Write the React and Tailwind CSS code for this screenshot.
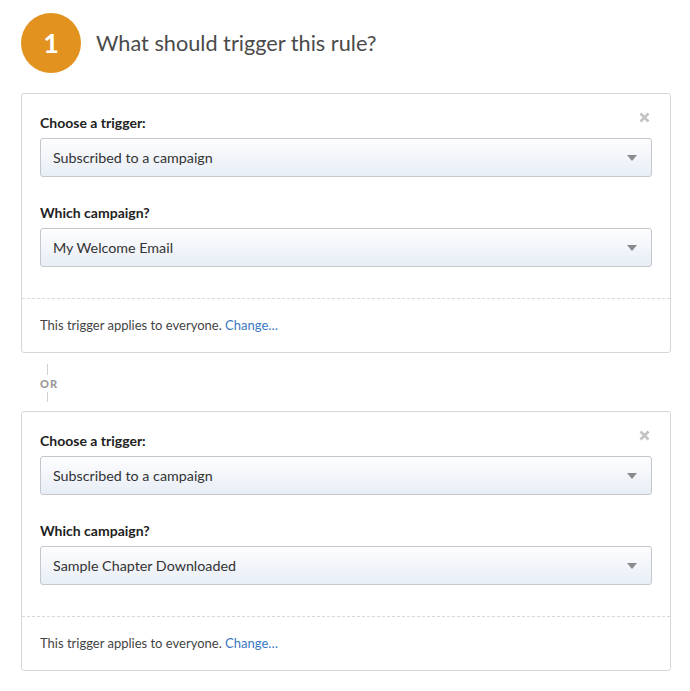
import React from "react";

const Select = ({value}) => (
  <div className="relative flex h-[39px] items-center rounded-[3px] border border-[#c4c7cc] bg-gradient-to-b from-[#fdfdfe] to-[#e8eef6] pl-[12px] text-[14.3px] text-[#333]">
    {value}
    <span className="absolute right-[14px] top-[16px] h-0 w-0 border-x-[5px] border-t-[6px] border-x-transparent border-t-[#8a8a8a]" />
  </div>
);

const TriggerCard = ({campaign}) => (
  <div className="relative rounded-[3px] border border-[#d6d6d6] bg-white">
    <svg
      className="absolute right-[20px] top-[18px]"
      width="11"
      height="11"
      viewBox="0 0 11 11"
    >
      <path d="M1.5 1.5 L9.5 9.5 M9.5 1.5 L1.5 9.5" stroke="#c3c3c3" strokeWidth="2.6" />
    </svg>
    <div className="px-[18px] pb-[31px] pt-[20px]">
      <div className="mb-[6px] h-[18px] text-[14px] font-bold leading-[18px] text-[#222]">
        Choose a trigger:
      </div>
      <Select value="Subscribed to a campaign" />
      <div className="mb-[6px] mt-[27px] h-[18px] text-[14px] font-bold leading-[18px] text-[#222]">
        Which campaign?
      </div>
      <Select value={campaign} />
    </div>
    <div className="flex h-[54px] items-center border-t border-dashed border-[#d9d9d9] px-[18px] text-[13px] text-[#444]">
      This trigger applies to everyone.&nbsp;
      <span className="text-[#3b78c3]">Change…</span>
    </div>
  </div>
);

export default function App() {
  return (
    <div className="min-h-[691px] w-[690px] bg-white font-['Lato',sans-serif]">
      <div className="flex items-center pl-[21px] pt-[13px]">
        <div className="flex h-[60px] w-[60px] items-center justify-center rounded-full bg-[#e2931f] text-[27px] font-bold text-white">
          1
        </div>
        <div className="ml-[15px] text-[21.7px] text-[#4a4a4a]">
          What should trigger this rule?
        </div>
      </div>
      <div className="ml-[21px] mr-[19px] mt-[20px]">
        <TriggerCard campaign="My Welcome Email" />
        <div className="flex flex-col items-start pb-[9px] pl-[19px] pt-[11px]">
          <div className="ml-[7px] h-[11px] w-px bg-[#d0d0d0]" />
          <div className="text-[11px] font-black leading-[17px] tracking-[1px] text-[#9a9a9a]">
            OR
          </div>
          <div className="ml-[7px] h-[10px] w-px bg-[#d0d0d0]" />
        </div>
        <TriggerCard campaign="Sample Chapter Downloaded" />
      </div>
    </div>
  );
}
